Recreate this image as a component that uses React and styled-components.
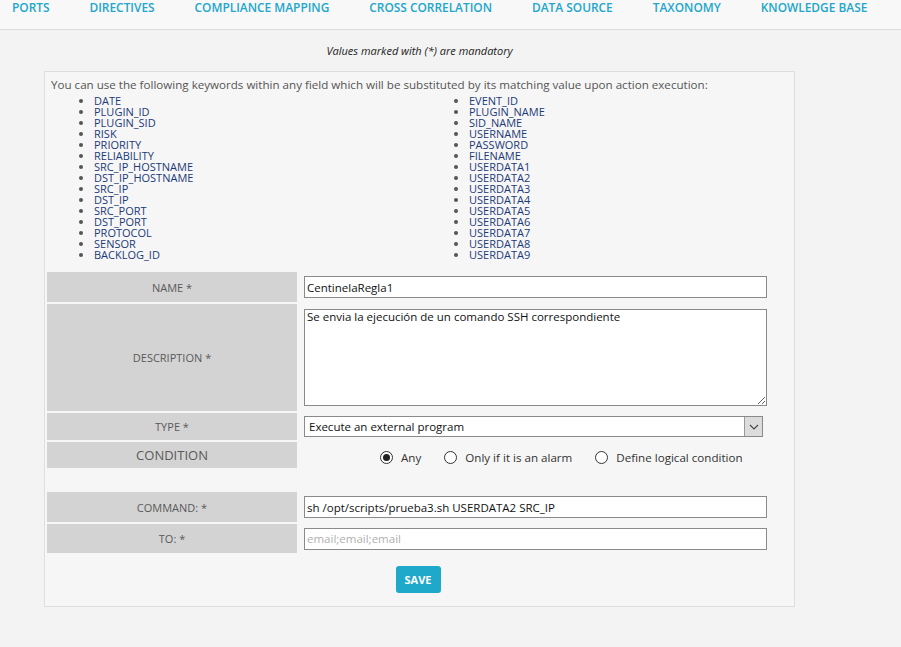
import React, { useState } from "react";
import styled, { createGlobalStyle } from "styled-components";

const navItems = [
  "PORTS",
  "DIRECTIVES",
  "COMPLIANCE MAPPING",
  "CROSS CORRELATION",
  "DATA SOURCE",
  "TAXONOMY",
  "KNOWLEDGE BASE",
];

const leftKeys = [
  "DATE",
  "PLUGIN_ID",
  "PLUGIN_SID",
  "RISK",
  "PRIORITY",
  "RELIABILITY",
  "SRC_IP_HOSTNAME",
  "DST_IP_HOSTNAME",
  "SRC_IP",
  "DST_IP",
  "SRC_PORT",
  "DST_PORT",
  "PROTOCOL",
  "SENSOR",
  "BACKLOG_ID",
];

const rightKeys = [
  "EVENT_ID",
  "PLUGIN_NAME",
  "SID_NAME",
  "USERNAME",
  "PASSWORD",
  "FILENAME",
  "USERDATA1",
  "USERDATA2",
  "USERDATA3",
  "USERDATA4",
  "USERDATA5",
  "USERDATA6",
  "USERDATA7",
  "USERDATA8",
  "USERDATA9",
];

function App() {
  const [condition, setCondition] = useState("any");

  return (
    <>
      <GlobalStyle />
      <NavBar>
        {navItems.map((item) => (
          <NavLink key={item}>{item}</NavLink>
        ))}
      </NavBar>
      <Main>
        <Mandatory>Values marked with (*) are mandatory</Mandatory>
        <Panel>
          <Intro>
            You can use the following keywords within any field which will be
            substituted by its matching value upon action execution:
          </Intro>
          <Keywords>
            <KeyList>
              {leftKeys.map((k) => (
                <li key={k}>{k}</li>
              ))}
            </KeyList>
            <KeyList>
              {rightKeys.map((k) => (
                <li key={k}>{k}</li>
              ))}
            </KeyList>
          </Keywords>

          <FormGrid>
            <Label $h={30}>NAME *</Label>
            <Cell>
              <TextInput defaultValue="CentinelaRegla1" />
            </Cell>

            <Label $h={107}>DESCRIPTION *</Label>
            <Cell $top>
              <TextArea defaultValue="Se envia la ejecución de un comando SSH correspondiente" />
            </Cell>

            <Label $h={27}>TYPE *</Label>
            <Cell>
              <SelectBox>
                <span>Execute an external program</span>
                <SelectArrow>
                  <svg width="10" height="6" viewBox="0 0 10 6">
                    <path d="M1 1l4 4 4-4" fill="none" stroke="#444" strokeWidth="1.1" />
                  </svg>
                </SelectArrow>
              </SelectBox>
            </Cell>

            <Label $h={26} $big>CONDITION</Label>
            <RadioCell>
              <RadioOption onClick={() => setCondition("any")}>
                <Radio $checked={condition === "any"} />
                Any
              </RadioOption>
              <RadioOption onClick={() => setCondition("alarm")}>
                <Radio $checked={condition === "alarm"} />
                Only if it is an alarm
              </RadioOption>
              <RadioOption onClick={() => setCondition("logic")}>
                <Radio $checked={condition === "logic"} />
                Define logical condition
              </RadioOption>
            </RadioCell>

            <Spacer />

            <Label $h={30}>COMMAND: *</Label>
            <Cell>
              <TextInput defaultValue="sh /opt/scripts/prueba3.sh USERDATA2 SRC_IP" />
            </Cell>

            <Label $h={29}>TO: *</Label>
            <Cell>
              <TextInput placeholder="email;email;email" />
            </Cell>
          </FormGrid>

          <Actions>
            <SaveButton>SAVE</SaveButton>
          </Actions>
        </Panel>
      </Main>
    </>
  );
}

const GlobalStyle = createGlobalStyle`
  html, body {
    margin: 0;
    padding: 0;
    background: #f3f3f3;
    font-family: "Open Sans", "DejaVu Sans", sans-serif;
  }
`;

const NavBar = styled.nav`
  height: 30px;
  box-sizing: border-box;
  background: #f8f8f8;
  border-bottom: 1px solid #dcdcdc;
  display: flex;
  gap: 40px;
  padding-left: 12px;
`;

const NavLink = styled.a`
  color: #22a6cc;
  font-size: 11.9px;
  font-weight: 600;
  line-height: 15px;
  cursor: pointer;
  white-space: nowrap;
`;

const Main = styled.main`
  width: 751px;
  margin-left: 44px;
  padding-top: 12px;
`;

const Mandatory = styled.div`
  text-align: center;
  font-style: italic;
  font-size: 11px;
  color: #222;
  height: 29px;
  line-height: 17px;
`;

const Panel = styled.section`
  border: 1px solid #dedede;
  background: #f6f6f6;
  padding: 5px 0 12px 0;
  height: 536px;
  box-sizing: border-box;
`;

const Intro = styled.p`
  margin: 0 0 0 6px;
  font-size: 11.6px;
  color: #555;
  line-height: 16px;
`;

const Keywords = styled.div`
  display: grid;
  grid-template-columns: 375px 1fr;
  padding-top: 2px;
`;

const KeyList = styled.ul`
  margin: 0;
  padding-left: 49px;
  list-style: disc;
  font-size: 11px;
  line-height: 11px;
  color: #1c3a78;
  li::marker {
    color: #555;
  }
`;

const FormGrid = styled.div`
  display: grid;
  grid-template-columns: 250px 1fr;
  column-gap: 2px;
  row-gap: 2px;
  margin: 12px 0 0 2px;
`;

const Label = styled.div`
  background: #d3d3d3;
  height: ${(p) => p.$h}px;
  display: flex;
  align-items: center;
  justify-content: center;
  color: #5a5a5a;
  font-size: ${(p) => (p.$big ? "13px" : "11px")};
`;

const Cell = styled.div`
  display: flex;
  align-items: ${(p) => (p.$top ? "flex-start" : "center")};
  padding-left: 5px;
  padding-top: ${(p) => (p.$top ? "5px" : "0")};
`;

const fieldFont = `
  font-family: "Open Sans", "DejaVu Sans", sans-serif;
  font-size: 11.5px;
  color: #111;
`;

const TextInput = styled.input`
  ${fieldFont}
  width: 463px;
  height: 22px;
  box-sizing: border-box;
  border: 1px solid #8a8a8a;
  background: #fff;
  padding: 0 2px;
  outline: none;
  &::placeholder {
    color: #b0b0b0;
  }
`;

const TextArea = styled.textarea`
  ${fieldFont}
  width: 463px;
  height: 97px;
  line-height: 13px;
  box-sizing: border-box;
  border: 1px solid #8a8a8a;
  background: #fff;
  padding: 0 2px;
  resize: vertical;
  outline: none;
`;

const SelectBox = styled.div`
  ${fieldFont}
  width: 459px;
  height: 21px;
  box-sizing: border-box;
  border: 1px solid #8a8a8a;
  background: #fff;
  display: flex;
  align-items: center;
  justify-content: space-between;
  padding-left: 4px;
`;

const SelectArrow = styled.span`
  width: 17px;
  height: 19px;
  background: #dcdcdc;
  border-left: 1px solid #9a9a9a;
  display: flex;
  align-items: center;
  justify-content: center;
`;

const RadioCell = styled.div`
  display: flex;
  align-items: center;
  padding: 5px 0 0 81px;
  gap: 23px;
  font-size: 11.6px;
  color: #333;
`;

const RadioOption = styled.label`
  display: flex;
  align-items: center;
  gap: 8px;
  cursor: pointer;
`;

const Radio = styled.span`
  width: 11px;
  height: 11px;
  border: 1px solid #333;
  border-radius: 50%;
  background: #fff;
  display: flex;
  align-items: center;
  justify-content: center;
  &::after {
    content: "";
    width: 7px;
    height: 7px;
    border-radius: 50%;
    background: ${(p) => (p.$checked ? "#222" : "transparent")};
  }
`;

const Spacer = styled.div`
  grid-column: 1 / -1;
  height: 20px;
`;

const Actions = styled.div`
  display: flex;
  justify-content: center;
  padding: 13px 0 0 0;
  margin-left: -3px;
`;

const SaveButton = styled.button`
  background: #1ea8c9;
  color: #fff;
  border: none;
  border-radius: 3px;
  font-family: "Open Sans", sans-serif;
  font-weight: 700;
  font-size: 11px;
  width: 45px;
  height: 27px;
  cursor: pointer;
`;

export default App;
